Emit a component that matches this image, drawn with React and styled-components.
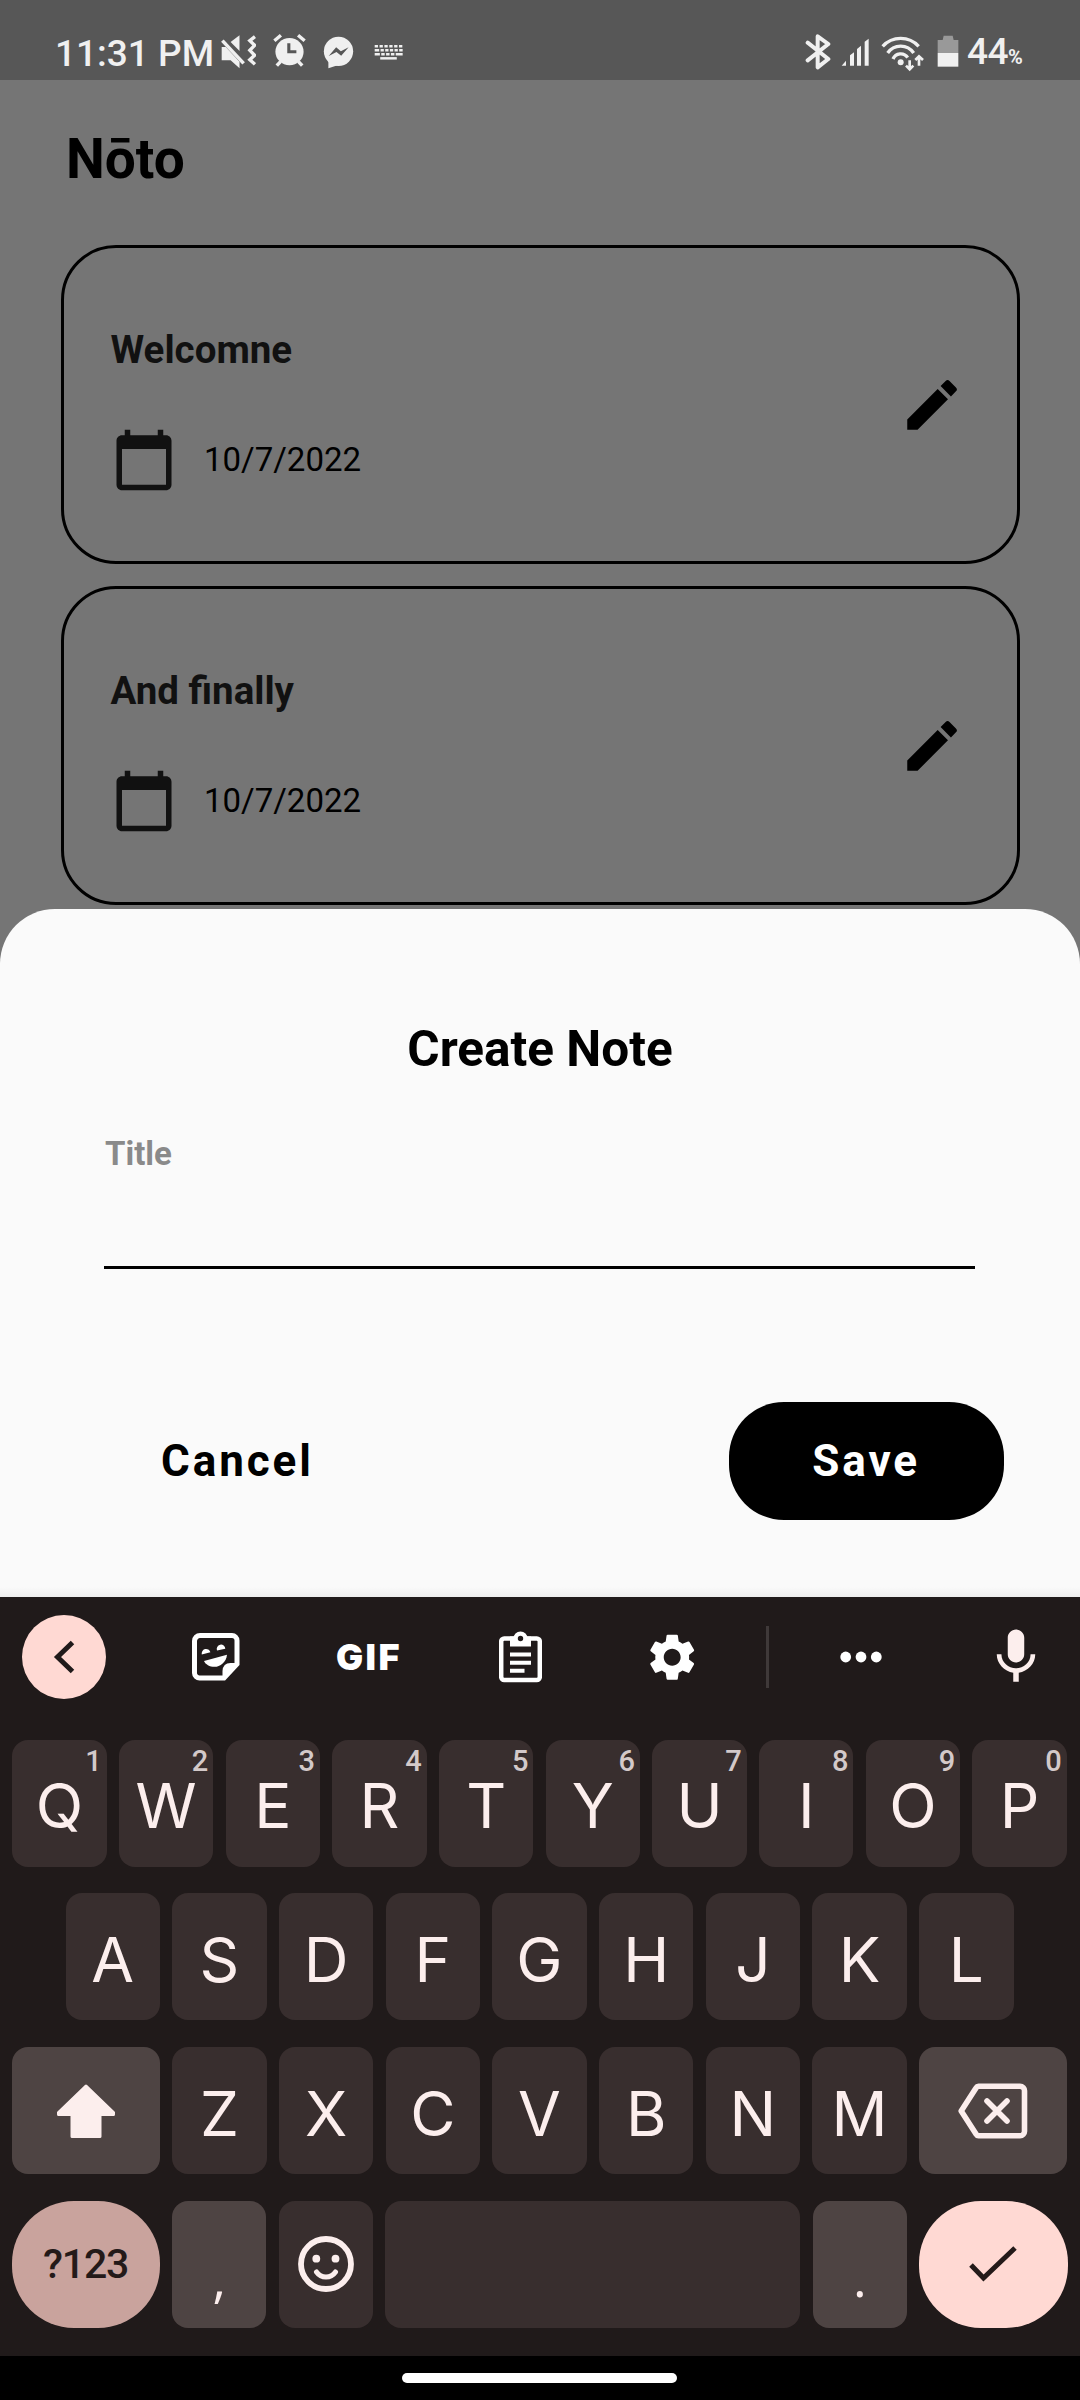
import React from "react";
import styled, { createGlobalStyle } from "styled-components";
import { MdCalendarToday, MdEdit, MdMic, MdSettings } from "react-icons/md";

const GlobalStyle = createGlobalStyle`
  * { box-sizing: border-box; }
  body { margin: 0; background: #757575; font-family: Roboto, "Liberation Sans", sans-serif; }
  button { border: 0; margin: 0; padding: 0; background: none; font: inherit; color: inherit; }
  svg { display: block; flex: none; }
`;

const Screen = styled.div`
  width: 1080px;
  height: 2400px;
  display: flex;
  flex-direction: column;
  background: #757575;
  overflow: hidden;
`;

/* ---------- Status bar ---------- */

const StatusBar = styled.header`
  flex: none;
  height: 80px;
  padding: 26px 54px 0 55px;
  display: flex;
  align-items: center;
  justify-content: space-between;
  background: #575757;
  color: #f0f0f0;
`;

const StatusGroup = styled.div`
  display: flex;
  align-items: center;
`;

const Clock = styled.span`
  width: 166px;
  padding-top: 2px;
  font-size: 37px;
  font-weight: 500;
  line-height: 40px;
  white-space: nowrap;
`;

const StatusGlyph = styled.svg`
  width: ${(p) => p.$w}px;
  height: 40px;
  margin-right: ${(p) => p.$gap || 0}px;
`;

const BatteryText = styled.span`
  width: 67px;
  padding: 2px 0 0 8px;
  font-size: 37px;
  font-weight: 500;
  line-height: 40px;
  letter-spacing: -0.5px;
  white-space: nowrap;
  small {
    font-size: 20px;
    font-weight: 700;
    letter-spacing: 0;
  }
`;

/* ---------- Notes list ---------- */

const NotesPage = styled.main`
  flex: none;
  height: 829px;
  padding: 44px 60px 0 61px;
`;

const AppTitle = styled.h1`
  margin: 0 0 51px 5px;
  font-size: 55px;
  font-weight: 700;
  line-height: 70px;
  color: #000;
`;

const NoteList = styled.div`
  display: flex;
  flex-direction: column;
  gap: 22px;
`;

const NoteCard = styled.article`
  height: 319px;
  padding: 0 52px 0 46.5px;
  display: flex;
  align-items: center;
  justify-content: space-between;
  border: 3px solid #000;
  border-radius: 55px;
`;

const NoteBody = styled.div`
  display: flex;
  flex-direction: column;
  gap: 52px;
  padding-top: 9px;
`;

const NoteTitle = styled.h2`
  margin: 0;
  font-size: 38.5px;
  font-weight: 700;
  line-height: 50px;
  color: #111;
`;

const NoteMeta = styled.div`
  display: flex;
  align-items: center;
  gap: 27.5px;
  color: #111;
`;

const NoteDate = styled.span`
  font-size: 33px;
  line-height: 40px;
  color: #000;
`;

/* ---------- Bottom sheet ---------- */

const Sheet = styled.section`
  flex: none;
  height: 688px;
  padding-top: 110px;
  display: flex;
  flex-direction: column;
  background: linear-gradient(to top, #eeeeee 0, #fafafa 10px);
  border-radius: 55px 55px 0 0;
  color: #000;
`;

const SheetTitle = styled.h2`
  margin: 0;
  font-size: 49.5px;
  font-weight: 700;
  line-height: 60px;
  letter-spacing: 0;
  text-align: center;
`;

const Field = styled.label`
  display: flex;
  flex-direction: column;
  margin: 55px 105px 0 104px;
  color: #8a8a8a;
  font-size: 33px;
  font-weight: 700;
  line-height: 40px;
`;

const FieldText = styled.span`
  padding-left: 1px;
`;

const FieldInput = styled.input`
  height: 95px;
  padding: 0;
  border: 0;
  border-bottom: 3px solid #000;
  background: transparent;
  font: 400 44px Roboto, sans-serif;
  color: #000;
  outline: none;
`;

const SheetActions = styled.div`
  display: flex;
  justify-content: space-between;
  margin-top: 132.5px;
  padding: 0 76.5px 0 77px;
`;

const SheetButton = styled.button`
  height: 118px;
  padding: 0 ${(p) => (p.$primary ? 83.5 : 84)}px;
  border-radius: 55px;
  background: ${(p) => (p.$primary ? "#000" : "transparent")};
  color: ${(p) => (p.$primary ? "#fff" : "#000")};
  font-size: 44px;
  font-weight: 700;
  line-height: 50px;
  letter-spacing: 2.9px;
`;

/* ---------- Keyboard ---------- */

const Keyboard = styled.section`
  flex: none;
  height: 759px;
  background: #201a1a;
  font-family: Inter, Roboto, sans-serif;
  color: #fceeed;
`;

const Toolbar = styled.div`
  height: 120px;
  display: grid;
  grid-template-columns: 140px repeat(4, 152px) 38.5px 149px 144.5px;
  align-items: center;
  justify-items: center;
  color: #fff;
`;

const BackButton = styled.button`
  justify-self: start;
  margin-left: 22px;
  width: 84px;
  height: 84px;
  display: grid;
  place-items: center;
  border-radius: 50%;
  background: #ffd9d3;
  color: #201a1a;
`;

const GifLabel = styled.span`
  padding-left: 2px;
  font-size: 36px;
  font-weight: 900;
  line-height: 40px;
  letter-spacing: 2.4px;
`;

const Divider = styled.span`
  width: 3px;
  height: 62px;
  background: #3f3939;
`;

const MicSlot = styled.span`
  padding-left: 16px;
  color: #fceeed;
`;

const Keys = styled.div`
  display: flex;
  flex-direction: column;
  gap: 26.8px;
  padding: 22.6px 12.5px 0 11.5px;
`;

const KeyRow = styled.div`
  display: flex;
  justify-content: center;
  gap: 12.2px;
`;

const keyColors = { normal: "#382e2e", special: "#4e4443", mode: "#c9a39d", action: "#ffd9d3" };

const Key = styled.button`
  position: relative;
  flex: ${(p) => (p.$grow ? "1 1 0" : "none")};
  width: ${(p) => (p.$wide ? 148.2 : 94.5)}px;
  height: 127px;
  padding-top: ${(p) => (p.$icon ? 0 : 6)}px;
  display: flex;
  align-items: center;
  justify-content: center;
  border-radius: ${(p) => (p.$round ? 62 : 16)}px;
  background: ${(p) => keyColors[p.$tone || "normal"]};
  color: ${(p) => (p.$round ? "#241a19" : "#fceeed")};
  font-size: 62px;
  line-height: 70px;
`;

const Hint = styled.span`
  position: absolute;
  top: 5px;
  right: 5px;
  font-family: Roboto, Inter, sans-serif;
  font-size: 29px;
  font-weight: 500;
  line-height: 32px;
  color: #d3c9c9;
`;

const ModeLabel = styled.span`
  font-family: Roboto, Inter, sans-serif;
  font-size: 41px;
  font-weight: 500;
  line-height: 50px;
  letter-spacing: -1.2px;
`;

const Punctuation = styled.span`
  padding-top: 20px;
  font-family: "Open Sans", Inter, sans-serif;
  font-size: 52px;
  line-height: 60px;
`;

const NavBar = styled.footer`
  flex: none;
  height: 44px;
  display: flex;
  justify-content: center;
  align-items: flex-start;
  padding: 17px 1px 0 0;
  background: #000;
`;

const HomeHandle = styled.span`
  width: 275px;
  height: 10px;
  border-radius: 5px;
  background: #fff;
`;

/* ---------- Drawn icons ---------- */

const MuteIcon = () => (
  <StatusGlyph $w={35} $gap={17} viewBox="0 0 102 120" preserveAspectRatio="none" fill="currentColor">
    <path d="M28 27 54 7V54Z" />
    <path d="M2 42H14L54 86V106L28 82H2Z" />
    <path d="M4 23 66 91" stroke="currentColor" strokeWidth="10" />
    <path d="M99 11 84 23 98 37 84 52 98 67 84 80 99 94" fill="none" stroke="currentColor" strokeWidth="10" />
  </StatusGlyph>
);

const AlarmIcon = () => (
  <StatusGlyph $w={33} $gap={17} viewBox="0 0 96 120" preserveAspectRatio="none" stroke="currentColor" strokeWidth="10" fill="none">
    <circle cx="48" cy="56" r="41" fill="currentColor" stroke="none" />
    <path d="M4 23 23 7M73 7 92 23M22 86 11 98M74 86 85 98" />
    <path d="M46 31V56H68" stroke="#575757" strokeWidth="9" />
  </StatusGlyph>
);

const MessengerIcon = () => (
  <StatusGlyph $w={31} $gap={20} viewBox="0 0 92 120" preserveAspectRatio="none" fill="currentColor">
    <ellipse cx="46" cy="55" rx="43.5" ry="44" />
    <path d="M16 76V106L46 96Z" />
    <path d="M17 69 39 43 53 55 76 43 54 68 40 57Z" fill="#575757" />
  </StatusGlyph>
);

const KeyboardIcon = () => (
  <StatusGlyph $w={29} viewBox="0 0 84 120" preserveAspectRatio="none" stroke="currentColor" strokeWidth="7.5" fill="none">
    <path d="M2 40H83" strokeDasharray="9.5 4.6" />
    <path d="M2 52H83" strokeDasharray="13 4 9.5 4 9.5 4 9.5 4 9.5 4 12" />
    <path d="M2 63.5H83" strokeDasharray="15 4 10 4 10 4 10 4 21" />
    <path d="M18 76H66" />
  </StatusGlyph>
);

const BluetoothIcon = () => (
  <StatusGlyph $w={26} $gap={10} viewBox="0 0 78 120" preserveAspectRatio="none" stroke="currentColor" strokeWidth="12" strokeLinejoin="round" strokeLinecap="round" fill="none">
    <path d="M8 29 70 78 38 103V10L70 33 8 82" />
  </StatusGlyph>
);

const SignalIcon = () => (
  <StatusGlyph $w={28} $gap={12} viewBox="0 0 84 120" preserveAspectRatio="none" fill="currentColor">
    <path d="M2 98 15 83V98ZM27 67 39 58V98H27ZM48 48 60 38V98H48ZM71 26 83 17V98H71Z" />
  </StatusGlyph>
);

const WifiIcon = () => (
  <StatusGlyph $w={44} $gap={12} viewBox="0 0 132 120" preserveAspectRatio="none" stroke="currentColor" strokeWidth="10" fill="none">
    <path d="M5 40A73 73 0 0 1 113 40M20 60A47 47 0 0 1 98 60M36 78A25 25 0 0 1 80 74" />
    <circle cx="59" cy="88" r="9" fill="currentColor" stroke="none" />
    <path d="M86 82V109M75 98 86 109 97 98M114 98V71M103 81 114 70 126 81" strokeWidth="8" />
  </StatusGlyph>
);

const BatteryIcon = () => (
  <StatusGlyph $w={22} viewBox="0 0 66 120" preserveAspectRatio="none">
    <path d="M20 8H47L50 21H64V60H2V21H17Z" fill="#999" />
    <path d="M2 60H64V101H2Z" fill="currentColor" />
  </StatusGlyph>
);

const ChevronLeft = () => (
  <svg width="24" height="36" viewBox="0 0 24 36" fill="none" stroke="currentColor" strokeWidth="5">
    <path d="M20.5 3.5 5.5 18 20.5 32.5" />
  </svg>
);

const StickerIcon = () => (
  <svg width="48" height="48" viewBox="0 0 48 48" fill="currentColor">
    <path d="M8 2.5H40A5 5 0 0 1 45 7.5V31L32 45H8A5 5 0 0 1 2.5 40V8A5.5 5.5 0 0 1 8 2.5Z" fill="none" stroke="currentColor" strokeWidth="5" />
    <path d="M30.5 46V38Q31 30 38.5 30H46L32 46Z" />
    <path d="M9.8 21.5A4.4 4.4 0 1 1 18.4 19.3ZM25 17.5A4.3 4.3 0 1 1 33.3 15.8Z" />
    <path d="M12 28 35 21.7C34.5 29 28 33.8 22.5 33.8 17.5 33.8 13.5 31.5 12 28Z" />
  </svg>
);

const ClipboardIcon = () => (
  <svg width="43" height="52" viewBox="0 0 43 52" fill="none" stroke="currentColor">
    <rect x="2.2" y="7.5" width="38.6" height="41.5" rx="3" strokeWidth="4.5" />
    <path d="M11 5.5H32V15.5H11Z" fill="currentColor" stroke="none" />
    <circle cx="21.5" cy="7.5" r="4.9" fill="#201a1a" strokeWidth="4.4" />
    <path d="M11 23.5H32M11 31.7H32M11 39.8H25.5" strokeWidth="4" />
  </svg>
);

const MoreIcon = () => (
  <svg width="42" height="12" viewBox="0 0 42 12" fill="currentColor">
    <circle cx="5.7" cy="6" r="5.4" />
    <circle cx="21" cy="6" r="5.4" />
    <circle cx="36.3" cy="6" r="5.4" />
  </svg>
);

const ShiftIcon = () => (
  <svg width="58" height="54" viewBox="0 0 58 54" fill="currentColor" stroke="currentColor" strokeWidth="3" strokeLinejoin="round">
    <path d="M29 2 56.5 28.5V30.5H43V52.5H15V30.5H1.5V28.5Z" />
  </svg>
);

const BackspaceIcon = () => (
  <svg width="70" height="56" viewBox="0 0 70 56" fill="none" stroke="currentColor" strokeWidth="5.6" strokeLinecap="round" strokeLinejoin="round">
    <path d="M20.5 3.3H62A4.5 4.5 0 0 1 66.5 8V48A4.5 4.5 0 0 1 62 52.7H20.5Q19 52.7 18 51L3.2 28 18 5Q19 3.3 20.5 3.3Z" />
    <path d="M29 18 49 38M49 18 29 38" />
  </svg>
);

const SmileIcon = () => (
  <svg width="56" height="56" viewBox="0 0 56 56" fill="none" stroke="currentColor">
    <circle cx="28" cy="28" r="25" strokeWidth="5.8" />
    <path d="M18.5 36Q22 41 28 41 34 41 37.5 36" strokeWidth="5" strokeLinecap="round" />
    <circle cx="18.3" cy="22.7" r="3.9" fill="currentColor" stroke="none" />
    <circle cx="37.5" cy="22.7" r="3.9" fill="currentColor" stroke="none" />
  </svg>
);

const CheckIcon = () => (
  <svg width="48" height="36" viewBox="0 0 48 36" fill="none" stroke="currentColor" strokeWidth="5">
    <path d="M2 19 14.5 32 46 2" />
  </svg>
);

/* ---------- Screen ---------- */

const notes = [
  { title: "Welcomne", date: "10/7/2022" },
  { title: "And finally", date: "10/7/2022" },
];

const Letters = ({ text, hints = "" }) =>
  text.split("").map((letter, i) => (
    <Key key={letter}>
      {hints[i] && <Hint>{hints[i]}</Hint>}
      {letter}
    </Key>
  ));

export default function App() {
  return (
    <Screen>
      <GlobalStyle />
      <StatusBar>
        <StatusGroup>
          <Clock>11:31 PM</Clock>
          <MuteIcon />
          <AlarmIcon />
          <MessengerIcon />
          <KeyboardIcon />
        </StatusGroup>
        <StatusGroup>
          <BluetoothIcon />
          <SignalIcon />
          <WifiIcon />
          <BatteryIcon />
          <BatteryText>
            44<small>%</small>
          </BatteryText>
        </StatusGroup>
      </StatusBar>

      <NotesPage>
        <AppTitle>Nōto</AppTitle>
        <NoteList>
          {notes.map((note) => (
            <NoteCard key={note.title}>
              <NoteBody>
                <NoteTitle>{note.title}</NoteTitle>
                <NoteMeta>
                  <MdCalendarToday size={66} />
                  <NoteDate>{note.date}</NoteDate>
                </NoteMeta>
              </NoteBody>
              <MdEdit size={66} color="#000" />
            </NoteCard>
          ))}
        </NoteList>
      </NotesPage>

      <Sheet>
        <SheetTitle>Create Note</SheetTitle>
        <Field>
          <FieldText>Title</FieldText>
          <FieldInput />
        </Field>
        <SheetActions>
          <SheetButton>Cancel</SheetButton>
          <SheetButton $primary>Save</SheetButton>
        </SheetActions>
      </Sheet>

      <Keyboard>
        <Toolbar>
          <BackButton>
            <ChevronLeft />
          </BackButton>
          <StickerIcon />
          <GifLabel>GIF</GifLabel>
          <ClipboardIcon />
          <MdSettings size={56.4} />
          <Divider />
          <MoreIcon />
          <MicSlot>
            <MdMic size={66} />
          </MicSlot>
        </Toolbar>
        <Keys>
          <KeyRow>
            <Letters text="QWERTYUIOP" hints="1234567890" />
          </KeyRow>
          <KeyRow>
            <Letters text="ASDFGHJKL" />
          </KeyRow>
          <KeyRow>
            <Key $wide $icon $tone="special">
              <ShiftIcon />
            </Key>
            <Letters text="ZXCVBNM" />
            <Key $wide $icon $tone="special">
              <BackspaceIcon />
            </Key>
          </KeyRow>
          <KeyRow>
            <Key $wide $icon $round $tone="mode">
              <ModeLabel>?123</ModeLabel>
            </Key>
            <Key $tone="special">
              <Punctuation>,</Punctuation>
            </Key>
            <Key $icon>
              <SmileIcon />
            </Key>
            <Key $grow />
            <Key $tone="special">
              <Punctuation>.</Punctuation>
            </Key>
            <Key $wide $icon $round $tone="action">
              <CheckIcon />
            </Key>
          </KeyRow>
        </Keys>
      </Keyboard>

      <NavBar>
        <HomeHandle />
      </NavBar>
    </Screen>
  );
}
